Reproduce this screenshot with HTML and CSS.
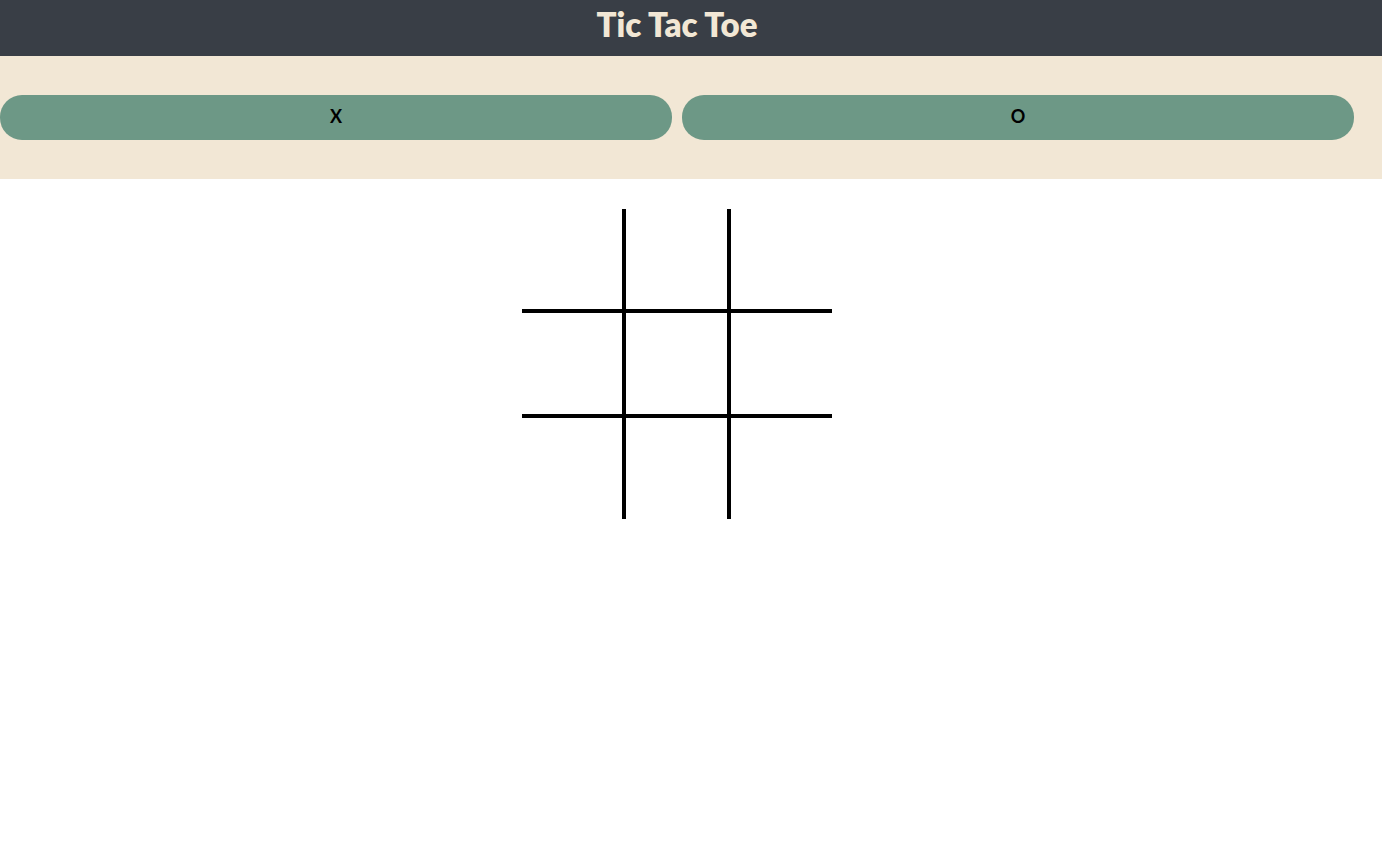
FILE: index.html
```html
<!DOCTYPE html>
<html lang="en">
<head>
<meta charset="utf-8">
<title>Tic Tac Toe</title>
<link rel="stylesheet" href="styles.css">
</head>
<body>
<header class="header">
  <h1 class="title">Tic Tac Toe</h1>
</header>
<section class="players">
  <button class="player">X</button>
  <button class="player">O</button>
</section>
<main class="main">
  <div class="board">
    <div class="cell"></div>
    <div class="cell col-mid"></div>
    <div class="cell"></div>
    <div class="cell row-mid"></div>
    <div class="cell col-mid row-mid"></div>
    <div class="cell row-mid"></div>
    <div class="cell"></div>
    <div class="cell col-mid"></div>
    <div class="cell"></div>
  </div>
</main>
</body>
</html>
```
FILE: styles.css
```css
* { box-sizing: border-box; }
html, body { margin: 0; padding: 0; background: #ffffff; }
body { font-family: Lato, "Open Sans", sans-serif; }

.header {
  background: #393e46;
  height: 56px;
  display: flex;
  align-items: center;
  justify-content: center;
  padding: 0 28px 8px 0;
}
.title {
  margin: 0;
  color: #f2e7d5;
  font-size: 33px;
  font-weight: 800;
  line-height: 1;
}

.players {
  background: #f2e7d5;
  padding: 39px 28px 39px 0;
  display: grid;
  grid-template-columns: 1fr 1fr;
  column-gap: 10px;
}
.player {
  height: 45px;
  border: none;
  border-radius: 22px;
  background: #6d9886;
  color: #000;
  font-family: Lato, "Open Sans", sans-serif;
  font-size: 18px;
  font-weight: 700;
  padding: 0 0 3px 0;
}

.main {
  padding: 30px 28px 0 0;
  display: flex;
  justify-content: center;
}
.board {
  display: grid;
  grid-template-columns: 100px 109px 101px;
  grid-template-rows: 100px 109px 101px;
}
.cell { background: transparent; }
.col-mid { border-left: 4px solid #000; border-right: 4px solid #000; }
.row-mid { border-top: 4px solid #000; border-bottom: 4px solid #000; }
```
